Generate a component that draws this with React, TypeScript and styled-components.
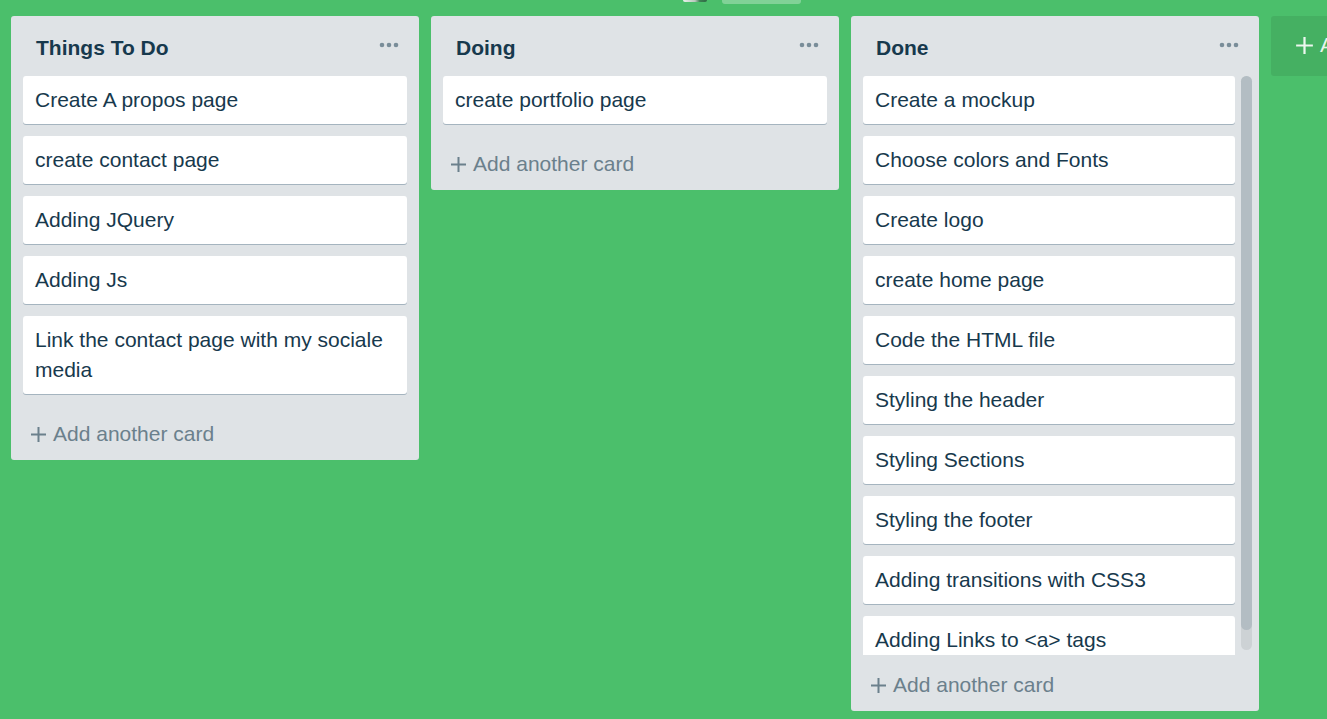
import React from "react";
import styled, { createGlobalStyle } from "styled-components";

const GlobalStyle = createGlobalStyle`
  html, body {
    margin: 0;
    padding: 0;
    height: 100%;
    overflow: hidden;
    background: #4bbf6b;
    font-family: "Liberation Sans", Arial, sans-serif;
  }
  #root { height: 100%; }
  * { box-sizing: border-box; }
`;

const Page = styled.div`
  height: 100vh;
  display: flex;
  flex-direction: column;
  overflow: hidden;
`;

const TopStrip = styled.div`
  height: 4px;
  flex-shrink: 0;
  display: flex;
  align-items: flex-start;
  padding-left: 683px;
  gap: 15px;
`;

const StripAvatar = styled.div`
  width: 24px;
  height: 2px;
  border-radius: 0 0 6px 6px;
  background: linear-gradient(90deg, #eaf2ec 0%, #b8c8bc 50%, #3d7f52 70%, #2f6b45 100%);
`;

const StripButton = styled.div`
  width: 79px;
  height: 4px;
  border-radius: 0 0 3px 3px;
  background: rgba(255, 255, 255, 0.3);
`;

const Board = styled.div`
  flex: 1;
  min-height: 0;
  display: flex;
  align-items: flex-start;
  gap: 12px;
  padding: 12px 0 8px 11px;
  overflow: hidden;
`;

const List = styled.section`
  width: 408px;
  flex-shrink: 0;
  max-height: 100%;
  display: flex;
  flex-direction: column;
  background: #dfe3e6;
  border-radius: 3px;
`;

const ListHeader = styled.header`
  height: 60px;
  flex-shrink: 0;
  display: flex;
  align-items: center;
  justify-content: space-between;
  padding: 0 20px 0 25px;
`;

const ListTitle = styled.h2`
  margin: 0;
  font-size: 21px;
  font-weight: 700;
  color: #17394d;
  padding-top: 3px;
`;

const MenuButton = styled.span`
  display: flex;
  align-items: center;
  color: #798d99;
  padding-bottom: 2px;
`;

const ListBody = styled.div<{ $scrollable: boolean }>`
  flex: 1;
  min-height: 0;
  display: flex;
  gap: 6px;
  padding: ${(p) => (p.$scrollable ? "0 7px 0 12px" : "0 12px")};
`;

const Cards = styled.div`
  flex: 1;
  min-width: 0;
  overflow: hidden;
  display: flex;
  flex-direction: column;
  gap: 12px;
  padding-bottom: 10px;
`;

const ScrollTrack = styled.div`
  width: 11px;
  flex-shrink: 0;
  margin-bottom: 5px;
  border-radius: 6px;
  background: #cdd2d5;
  display: flex;
  flex-direction: column;
`;

const ScrollThumb = styled.div`
  width: 100%;
  border-radius: 6px;
  background: #b3bdc3;
`;

const Card = styled.div`
  flex-shrink: 0;
  background: #ffffff;
  border-radius: 3px;
  box-shadow: 0 1px 0 #a5b4bf;
  padding: 9px 12px;
  font-size: 21px;
  line-height: 30px;
  color: #17394d;
`;

const AddCard = styled.div`
  height: 56px;
  flex-shrink: 0;
  display: flex;
  align-items: center;
  gap: 6px;
  padding: 4px 0 0 19px;
  font-size: 21px;
  color: #6b808c;
`;

const AddList = styled.div`
  width: 300px;
  height: 60px;
  flex-shrink: 0;
  display: flex;
  align-items: center;
  gap: 6px;
  padding: 0 0 2px 24px;
  border-radius: 3px;
  background: rgba(0, 0, 0, 0.08);
  color: rgba(255, 255, 255, 0.9);
  font-size: 21px;
`;

const Dots = () => (
  <svg width="20" height="6" viewBox="0 0 20 6">
    <circle cx="3" cy="3" r="2.3" fill="currentColor" />
    <circle cx="10" cy="3" r="2.3" fill="currentColor" />
    <circle cx="17" cy="3" r="2.3" fill="currentColor" />
  </svg>
);

const Plus = ({ size = 17 }: { size?: number }) => (
  <svg width={size} height={size} viewBox="0 0 17 17">
    <path d="M8.5 1v15M1 8.5h15" stroke="currentColor" strokeWidth="2" fill="none" />
  </svg>
);

type ListData = { title: string; cards: string[]; thumb?: number };

const lists: ListData[] = [
  {
    title: "Things To Do",
    cards: [
      "Create A propos page",
      "create contact page",
      "Adding JQuery",
      "Adding Js",
      "Link the contact page with my sociale media",
    ],
  },
  { title: "Doing", cards: ["create portfolio page"] },
  {
    title: "Done",
    thumb: 0.965,
    cards: [
      "Create a mockup",
      "Choose colors and Fonts",
      "Create logo",
      "create home page",
      "Code the HTML file",
      "Styling the header",
      "Styling Sections",
      "Styling the footer",
      "Adding transitions with CSS3",
      "Adding Links to <a> tags",
    ],
  },
];

export default function App() {
  return (
    <>
      <GlobalStyle />
      <Page>
        <TopStrip>
          <StripAvatar />
          <StripButton />
        </TopStrip>
        <Board>
          {lists.map((l) => (
            <List key={l.title}>
              <ListHeader>
                <ListTitle>{l.title}</ListTitle>
                <MenuButton>
                  <Dots />
                </MenuButton>
              </ListHeader>
              <ListBody $scrollable={l.thumb !== undefined}>
                <Cards>
                  {l.cards.map((c) => (
                    <Card key={c}>{c}</Card>
                  ))}
                </Cards>
                {l.thumb !== undefined && (
                  <ScrollTrack>
                    <ScrollThumb style={{ height: `${l.thumb * 100}%` }} />
                  </ScrollTrack>
                )}
              </ListBody>
              <AddCard>
                <Plus />
                Add another card
              </AddCard>
            </List>
          ))}
          <AddList>
            <Plus size={19} />
            Add another list
          </AddList>
        </Board>
      </Page>
    </>
  );
}
